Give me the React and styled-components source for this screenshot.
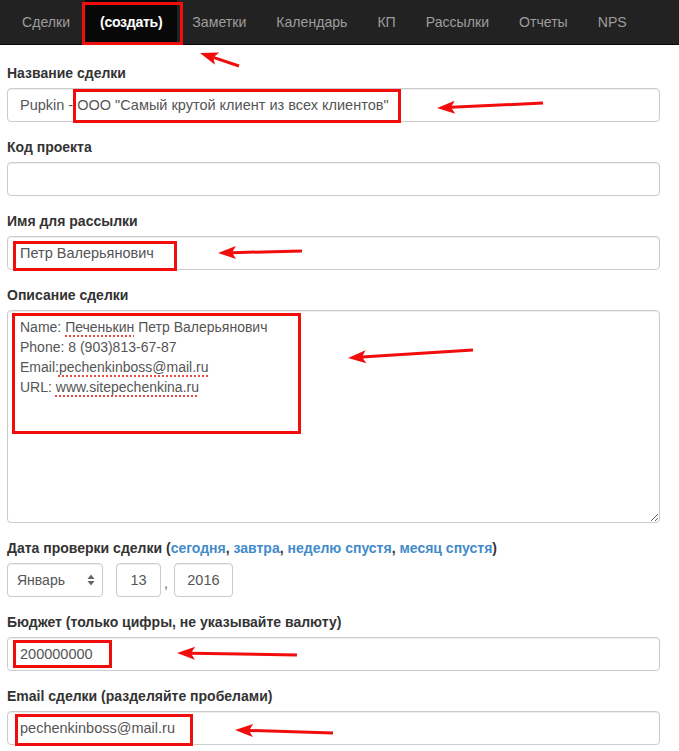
import React from "react";
import styled, { createGlobalStyle } from "styled-components";

const GlobalStyle = createGlobalStyle`
  body {
    margin: 0;
    background: #fff;
    font-family: "Liberation Sans", Arial, sans-serif;
    font-size: 14px;
    line-height: 20px;
    color: #333;
  }
  * { box-sizing: border-box; }
`;

const Page = styled.div`
  position: relative;
  width: 679px;
  min-height: 751px;
  overflow: hidden;
`;

const Navbar = styled.nav`
  height: 45px;
  background: #222;
  border-bottom: 1px solid #080808;
  padding-left: 7px;
`;

const NavList = styled.ul`
  display: flex;
  margin: 0;
  padding: 0;
  list-style: none;
  height: 44px;
`;

const NavLink = styled.li`
  display: flex;
  align-items: center;
  padding: 0 15px;
  height: 44px;
  font-size: 14.1px;
  color: ${(p) => (p.active ? "#fff" : "#9d9d9d")};
  font-weight: ${(p) => (p.active ? "bold" : "normal")};
  letter-spacing: ${(p) => (p.active ? "-0.3px" : "0")};
  background: ${(p) => (p.active ? "#080808" : "transparent")};
  cursor: pointer;
`;

const Form = styled.form`
  width: 653px;
  margin: 18px 0 0 7px;
`;

const Group = styled.div`
  margin-bottom: 15px;
`;

const Label = styled.label`
  display: block;
  margin-bottom: 5px;
  font-weight: bold;
  font-size: 14px;
  line-height: 20px;
  color: #333;
`;

const Link = styled.a`
  color: #428bca;
  text-decoration: none;
`;

const Input = styled.input`
  display: block;
  width: ${(p) => p.w || "100%"};
  height: 34px;
  padding: 6px 12px;
  font-family: inherit;
  font-size: 14.5px;
  color: #555;
  text-align: ${(p) => (p.center ? "center" : "left")};
  background: #fff;
  border: 1px solid #ccc;
  border-radius: 4px;
  box-shadow: inset 0 1px 1px rgba(0, 0, 0, 0.075);
  outline: none;
`;

const TextArea = styled.div`
  height: 213px;
  padding: 6px 12px;
  font-size: 14px;
  line-height: 20px;
  color: #555;
  border: 1px solid #ccc;
  border-radius: 4px;
  box-shadow: inset 0 1px 1px rgba(0, 0, 0, 0.075);
  overflow: auto;
  resize: vertical;
`;

const Misspelled = styled.span`
  text-decoration: underline dotted #ea4a44;
  text-decoration-thickness: 2px;
  text-underline-offset: 3px;
`;

const DateRow = styled.div`
  display: flex;
  align-items: center;
`;

const SelectBox = styled.div`
  position: relative;
  width: 96px;
  height: 34px;
  margin-right: 13px;
`;

const Select = styled.select`
  appearance: none;
  width: 100%;
  height: 100%;
  padding: 0 9px;
  font-family: inherit;
  font-size: 14px;
  color: #555;
  background: #fff;
  border: 1px solid #ccc;
  border-radius: 4px;
  box-shadow: inset 0 1px 1px rgba(0, 0, 0, 0.075);
  outline: none;
`;

const SelectArrows = styled.svg`
  position: absolute;
  right: 8px;
  top: 11px;
  pointer-events: none;
`;

const Comma = styled.span`
  margin: 6px 6px 0 3px;
  color: #555;
`;

const Overlay = styled.svg`
  position: absolute;
  left: 0;
  top: 0;
  pointer-events: none;
`;

const RED = "#f20d0d";

const Arrow = ({ from, to }) => {
  const dx = to[0] - from[0];
  const dy = to[1] - from[1];
  const len = Math.hypot(dx, dy);
  const ux = dx / len;
  const uy = dy / len;
  const hl = 18;
  const hw = 6.5;
  const bx = to[0] - ux * hl;
  const by = to[1] - uy * hl;
  const pts = [
    `${to[0]},${to[1]}`,
    `${bx - uy * hw},${by + ux * hw}`,
    `${bx + ux * 4},${by + uy * 4}`,
    `${bx + uy * hw},${by - ux * hw}`,
  ].join(" ");
  return (
    <g>
      <line x1={from[0]} y1={from[1]} x2={bx + ux * 4} y2={by + uy * 4} stroke={RED} strokeWidth="3" />
      <polygon points={pts} fill={RED} />
    </g>
  );
};

const Box = ({ x, y, w, h }) => (
  <rect x={x} y={y} width={w} height={h} fill="none" stroke={RED} strokeWidth="3" />
);

const tabs = ["Сделки", "(создать)", "Заметки", "Календарь", "КП", "Рассылки", "Отчеты", "NPS"];

const App = () => {
  return (
    <Page>
      <GlobalStyle />
      <Navbar>
        <NavList>
          {tabs.map((t) => (
            <NavLink key={t} active={t === "(создать)"}>
              {t}
            </NavLink>
          ))}
        </NavList>
      </Navbar>

      <Form onSubmit={(e) => e.preventDefault()}>
        <Group>
          <Label>Название сделки</Label>
          <Input readOnly defaultValue={'Pupkin - ООО "Самый крутой клиент из всех клиентов"'} />
        </Group>
        <Group>
          <Label>Код проекта</Label>
          <Input readOnly defaultValue="" />
        </Group>
        <Group>
          <Label>Имя для рассылки</Label>
          <Input readOnly defaultValue="Петр Валерьянович" />
        </Group>
        <Group>
          <Label>Описание сделки</Label>
          <TextArea>
            <div>
              Name: <Misspelled>Печенькин</Misspelled> Петр Валерьянович
            </div>
            <div>Phone: 8 (903)813-67-87</div>
            <div>
              Email:<Misspelled>pechenkinboss@mail.ru</Misspelled>
            </div>
            <div>
              URL: <Misspelled>www.sitepechenkina.ru</Misspelled>
            </div>
          </TextArea>
        </Group>
        <Group>
          <Label>
            Дата проверки сделки (<Link href="#">сегодня</Link>, <Link href="#">завтра</Link>,{" "}
            <Link href="#">неделю спустя</Link>, <Link href="#">месяц спустя</Link>)
          </Label>
          <DateRow>
            <SelectBox>
              <Select defaultValue="1">
                <option value="1">Январь</option>
                <option value="2">Февраль</option>
              </Select>
              <SelectArrows width="8" height="12" viewBox="0 0 8 12">
                <path d="M4 0.5 L7.5 5 H0.5 Z" fill="#666" />
                <path d="M4 11.5 L7.5 7 H0.5 Z" fill="#666" />
              </SelectArrows>
            </SelectBox>
            <Input readOnly center w="45px" defaultValue="13" />
            <Comma>,</Comma>
            <Input readOnly center w="59px" defaultValue="2016" />
          </DateRow>
        </Group>
        <Group>
          <Label>Бюджет (только цифры, не указывайте валюту)</Label>
          <Input readOnly defaultValue="200000000" />
        </Group>
        <Group>
          <Label>Email сделки (разделяйте пробелами)</Label>
          <Input readOnly defaultValue="pechenkinboss@mail.ru" />
        </Group>
      </Form>

      <Overlay width="679" height="751" viewBox="0 0 679 751">
        <Box x={83.5} y={3.5} w={98} h={40} />
        <Arrow from={[239, 66]} to={[200, 53]} />
        <Box x={74.5} y={90.5} w={325} h={31} />
        <Arrow from={[543, 103]} to={[437, 108]} />
        <Box x={14.5} y={242.5} w={161} h={27} />
        <Arrow from={[302, 251]} to={[218, 253]} />
        <Box x={13.5} y={314.5} w={286} h={118} />
        <Arrow from={[473, 350]} to={[348, 358]} />
        <Box x={14.5} y={641.5} w={96} h={25} />
        <Arrow from={[297, 655]} to={[177, 653]} />
        <Box x={16.5} y={715.5} w={175} h={29} />
        <Arrow from={[333, 733]} to={[235, 730]} />
      </Overlay>
    </Page>
  );
};

export default App;
